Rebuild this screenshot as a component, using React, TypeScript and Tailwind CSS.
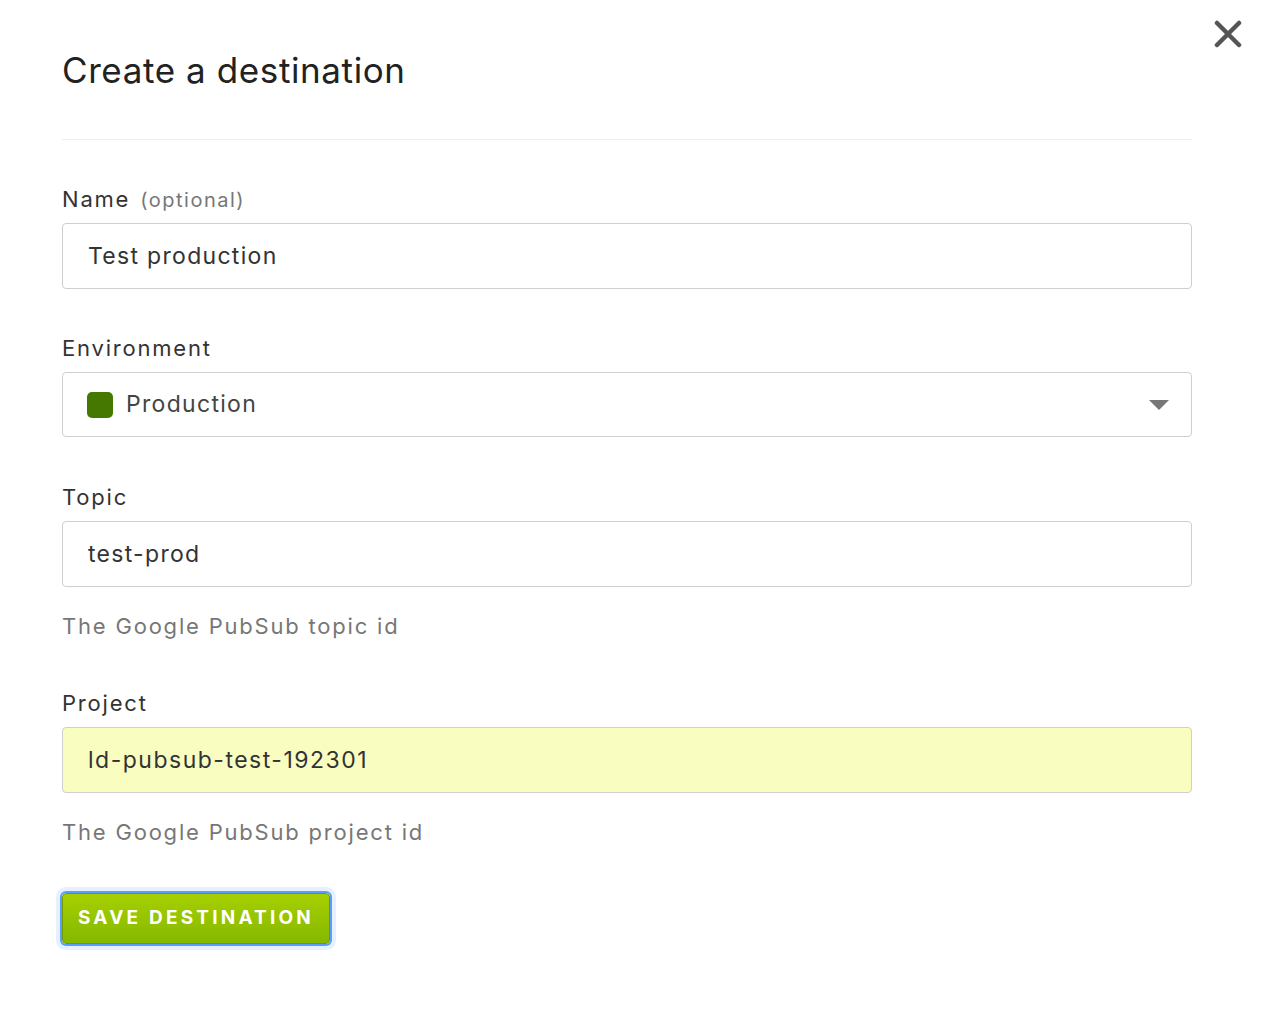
import React, { useState } from 'react';

function Field({
  label,
  hint,
  children,
}: {
  label: React.ReactNode;
  hint?: string;
  children: React.ReactNode;
}) {
  return (
    <div>
      <div className="h-[28px] leading-[28px] text-[22px] text-[#333] tracking-[1.8px]">{label}</div>
      <div className="mt-[10px]">{children}</div>
      {hint && (
        <div className="mt-[25px] h-[28px] leading-[28px] text-[22px] text-[#777] tracking-[1.8px]">{hint}</div>
      )}
    </div>
  );
}

export default function App() {
  const [name, setName] = useState('Test production');
  const [topic, setTopic] = useState('test-prod');
  const [project, setProject] = useState('ld-pubsub-test-192301');

  const inputCls =
    'w-full h-[66px] px-[25px] rounded-[4px] border border-[#cfcfcf] text-[23px] text-[#333] tracking-[1.3px] outline-none';

  return (
    <div
      className="relative w-[1272px] h-[1016px] bg-white"
      style={{ fontFamily: 'Inter, "Liberation Sans", sans-serif' }}
    >
      <button className="absolute right-[28px] top-[18px] w-[32px] h-[32px] flex items-center justify-center text-[#555]">
        <svg width="28" height="28" viewBox="0 0 28 28">
          <path d="M3 3 L25 25 M25 3 L3 25" stroke="currentColor" strokeWidth="4.5" strokeLinecap="round" />
        </svg>
      </button>

      <div className="pl-[62px] pr-[80px] pt-[48px]">
        <h1 className="h-[44px] leading-[44px] text-[35px] text-[#222] tracking-[0.6px]">Create a destination</h1>
        <div className="mt-[47px] h-px bg-[#eeeeee]" />

        <div className="mt-[45px] flex flex-col">
          <Field
            label={
              <span>
                Name <span className="ml-[2px] text-[20px] text-[#777] tracking-[1.5px]">(optional)</span>
              </span>
            }
          >
            <input className={inputCls} value={name} onChange={(e) => setName(e.target.value)} />
          </Field>

          <div className="mt-[45px]">
            <Field label="Environment">
              <div className="w-full h-[65px] pl-[24px] pr-[22px] rounded-[4px] border border-[#cfcfcf] flex items-center">
                <span className="w-[26px] h-[26px] rounded-[5px] bg-[#447800]" />
                <span className="ml-[13px] text-[23px] text-[#444] tracking-[1.3px]">Production</span>
                <span className="ml-auto">
                  <svg width="20" height="10" viewBox="0 0 20 10">
                    <path d="M0 0 H20 L10 10 Z" fill="#777" />
                  </svg>
                </span>
              </div>
            </Field>
          </div>

          <div className="mt-[46px]">
            <Field label="Topic" hint="The Google PubSub topic id">
              <input className={inputCls + ' h-[65px]'} value={topic} onChange={(e) => setTopic(e.target.value)} />
            </Field>
          </div>

          <div className="mt-[49px]">
            <Field label="Project" hint="The Google PubSub project id">
              <input
                className={inputCls + ' bg-[#fafdc0] tracking-[1.5px]'}
                value={project}
                onChange={(e) => setProject(e.target.value)}
              />
            </Field>
          </div>

          <div className="mt-[47px]">
            <button className="w-[268px] h-[51px] rounded-[4px] border border-[#6f9a00] bg-gradient-to-b from-[#a6d000] to-[#85b800] text-white text-[19px] font-bold tracking-[3.2px] shadow-[0_0_0_2px_#5b9dff,0_0_0_6px_rgba(91,157,255,0.15)]">
              SAVE DESTINATION
            </button>
          </div>
        </div>
      </div>
    </div>
  );
}
